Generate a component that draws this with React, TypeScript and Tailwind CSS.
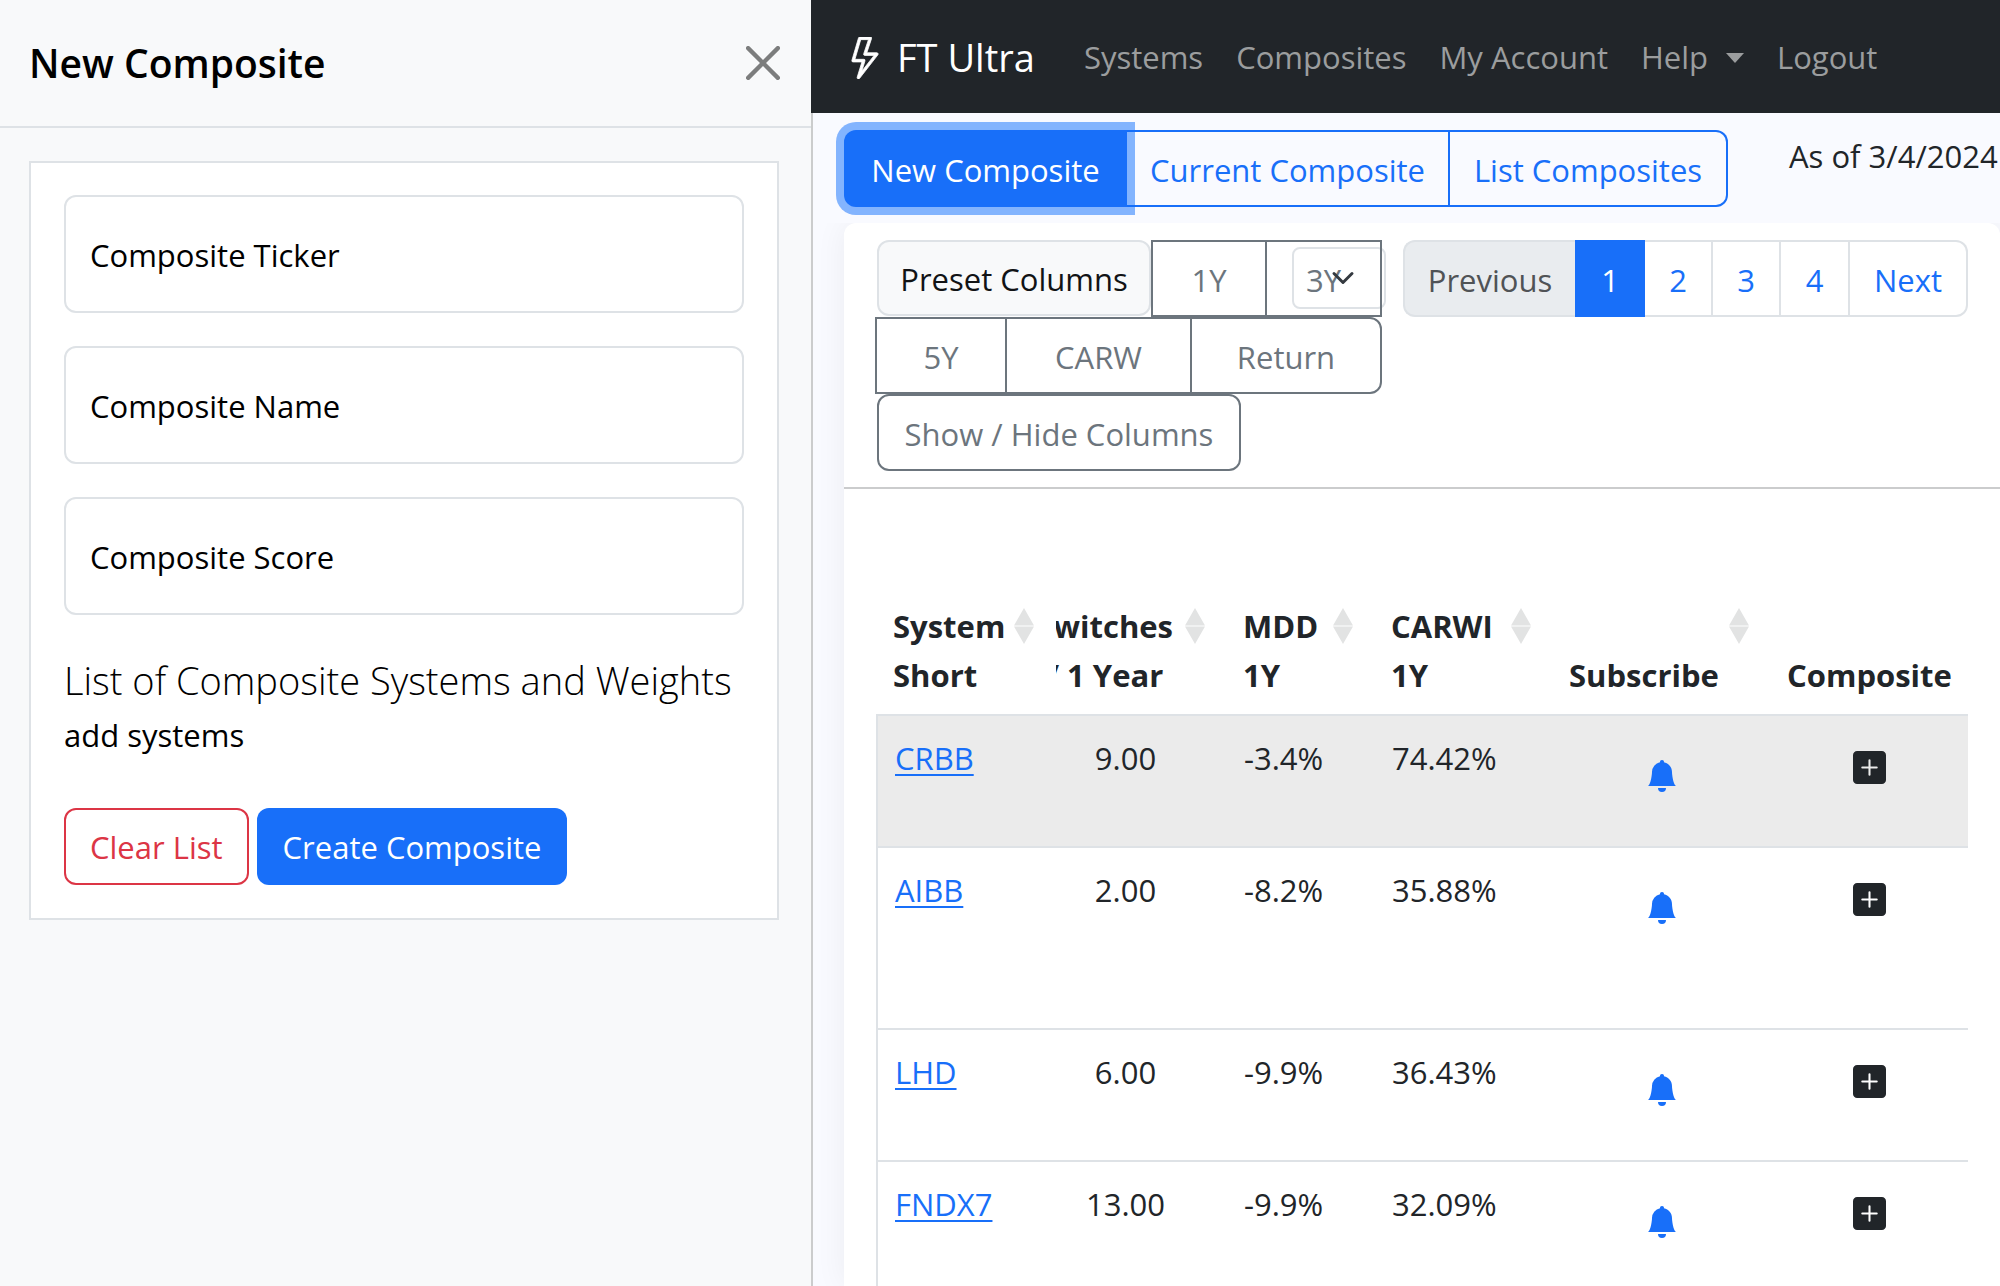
import React from "react";
import { BsBellFill, BsLightning, BsPlusSquareFill } from "react-icons/bs";

const fields = ["Composite Ticker", "Composite Name", "Composite Score"];

const rows = [
  { name: "CRBB", switches: "9.00", mdd: "-3.4%", carwi: "74.42%", row: "h-[132px] bg-[#ebebeb]" },
  { name: "AIBB", switches: "2.00", mdd: "-8.2%", carwi: "35.88%", row: "h-[182px]" },
  { name: "LHD", switches: "6.00", mdd: "-9.9%", carwi: "36.43%", row: "h-[132px]" },
  { name: "FNDX7", switches: "13.00", mdd: "-9.9%", carwi: "32.09%", row: "h-[132px]" },
];

function SortIcon() {
  return (
    <svg viewBox="0 0 20 36" className="h-9 w-5 shrink-0 text-[#e2e3e3]" fill="currentColor" aria-hidden="true">
      <path d="M10 0L20 17.5H0zM0 18.5H20L10 36z" />
    </svg>
  );
}

function HeadCell({ lines, sortable = true }: { lines: [string, string]; sortable?: boolean }) {
  return (
    <th scope="col" className="pr-[22px] pb-[14px] pl-4 text-left align-bottom font-bold">
      <div className="flex items-start justify-between">
        <span className="whitespace-nowrap">
          <span className="block h-[49px]">{lines[0]}</span>
          <span className="block h-[49px]">{lines[1]}</span>
        </span>
        {sortable && (
          <button type="button" aria-label={"Sort by " + lines.join(" ")} className="pt-[6px]">
            <SortIcon />
          </button>
        )}
      </div>
    </th>
  );
}

function Sidebar() {
  return (
    <aside className="flex w-[811px] shrink-0 flex-col bg-[#f8f9fa] text-black">
      <header className="flex h-32 items-center justify-between border-b-2 border-[#dee2e6] pr-[31px] pl-[29px]">
        <h1 className="text-[39px] font-semibold">New Composite</h1>
        <button type="button" aria-label="Close">
          <svg viewBox="0 0 16 16" className="size-[34px] text-[#7c7d7d]" fill="currentColor">
            <path d="M.293.293a1 1 0 0 1 1.414 0L8 6.586 14.293.293a1 1 0 1 1 1.414 1.414L9.414 8l6.293 6.293a1 1 0 0 1-1.414 1.414L8 9.414l-6.293 6.293a1 1 0 0 1-1.414-1.414L6.586 8 .293 1.707a1 1 0 0 1 0-1.414z" />
          </svg>
        </button>
      </header>
      <form className="mx-8 mt-[33px] ml-[29px] border-2 border-[#dee2e6] bg-white px-[33px] pt-8 pb-[33px]">
        <div className="flex flex-col gap-[33px]">
          {fields.map((f) => (
            <input
              key={f}
              type="text"
              aria-label={f}
              placeholder={f}
              className="h-[118px] w-full rounded-xl border-2 border-[#dee2e6] bg-white px-6 pt-[2px] placeholder:text-black placeholder:opacity-100"
            />
          ))}
        </div>
        <h2 className="mt-[38px] text-[38px] leading-[54px] font-light whitespace-nowrap">List of Composite Systems and Weights</h2>
        <p className="leading-[56px]">add systems</p>
        <div className="mt-[45px] flex gap-2">
          <button type="button" className="h-[77px] rounded-xl border-2 border-[#dc3545] px-6 pt-[2px] text-[#dc3545]">
            Clear List
          </button>
          <button type="submit" className="h-[77px] rounded-xl bg-[#186ff9] px-[26px] pt-[2px] text-white">
            Create Composite
          </button>
        </div>
      </form>
    </aside>
  );
}

function NavBar() {
  return (
    <nav className="flex h-[113px] shrink-0 items-center bg-[#212529] pt-[2px] pl-[33px] text-[#9b9d9e]">
      <a href="#home" className="mr-[49px] flex items-center gap-[11px] text-[38px] whitespace-nowrap text-white">
        <BsLightning className="size-[42px]" stroke="currentColor" strokeWidth={0.3} />
        FT Ultra
      </a>
      <div className="flex gap-[33px] whitespace-nowrap">
        <a href="#systems">Systems</a>
        <a href="#composites">Composites</a>
        <a href="#account">My Account</a>
        <button type="button" className="flex items-center gap-[18px]">
          Help
          <svg viewBox="0 0 18 10" className="h-[10px] w-[18px]" fill="currentColor" aria-hidden="true">
            <path d="M0 0h18L9 10z" />
          </svg>
        </button>
        <a href="#logout">Logout</a>
      </div>
    </nav>
  );
}

function Toolbar() {
  const preset = "flex h-[77px] items-center justify-center border-2 border-[#6c757d] pt-[3px]";
  const page = "flex h-[77px] items-center justify-center border-y-2 border-r-2 border-[#dee2e6] pt-[3px] text-[#186ff9]";
  return (
    <div className="flex items-start gap-[21px] border-b-2 border-[#cbcccd] pt-[17px] pb-4 pl-[31px] whitespace-nowrap">
      <div className="w-[507px] text-[#6c757d]">
        <div className="flex">
          <span className="ml-[2px] flex h-[76px] w-[274px] items-center justify-center rounded-xl border-2 border-[#dee2e6] bg-[#f8f9fa] pt-[3px] text-[#111315]">
            Preset Columns
          </span>
          <button type="button" className={preset + " w-[116px]"}>1Y</button>
          <div className="relative -ml-[2px] flex-1">
            <select
              aria-label="Rows per page"
              className="absolute top-[7px] -right-1 h-[62px] w-[94px] appearance-none rounded-lg border-2 border-[#dee2e6] bg-transparent text-transparent"
            >
              <option>10</option>
            </select>
            <button type="button" className={preset + " relative w-full"}>3Y</button>
            <svg viewBox="0 0 16 16" className="pointer-events-none absolute top-[26px] right-[27px] size-6 text-[#343a40]" fill="none" stroke="currentColor" strokeWidth="2" strokeLinecap="round" strokeLinejoin="round" aria-hidden="true">
              <path d="m2 5 6 6 6-6" />
            </svg>
          </div>
        </div>
        <div className="flex">
          <button type="button" className={preset + " w-[132px]"}>5Y</button>
          <button type="button" className={preset + " -ml-[2px] w-[187px]"}>CARW</button>
          <button type="button" className={preset + " -ml-[2px] flex-1 rounded-tr-xl rounded-br-xl"}>Return</button>
        </div>
        <button type="button" className={preset + " ml-[2px] w-[364px] rounded-xl"}>Show / Hide Columns</button>
      </div>
      <nav aria-label="Pagination" className="flex">
        <button type="button" disabled className="h-[77px] w-[172px] rounded-l-xl border-2 border-r-0 border-[#dee2e6] bg-[#e9ecef] pt-[3px] text-[#505356]">
          Previous
        </button>
        <button type="button" aria-current="page" className="h-[77px] w-[70px] bg-[#186ff9] pt-[3px] text-white">1</button>
        <button type="button" className={page + " w-[68px]"}>2</button>
        <button type="button" className={page + " w-[68px]"}>3</button>
        <button type="button" className={page + " w-[69px]"}>4</button>
        <button type="button" className={page + " w-[118px] rounded-r-xl"}>Next</button>
      </nav>
    </div>
  );
}

function SystemsTable() {
  return (
    <table className="mt-[110px] mr-8 ml-8 w-[calc(100%-64px)] table-fixed border-collapse">
      <colgroup>
        <col className="w-[179px]" />
        <col className="w-[171px]" />
        <col className="w-[148px]" />
        <col className="w-[178px]" />
        <col className="w-[218px]" />
        <col />
      </colgroup>
      <thead>
        <tr className="h-[116px] align-top leading-[49px]">
          <HeadCell lines={["System", "Short"]} />
          <th scope="col" className="pr-[22px] pb-[14px] text-left align-bottom font-bold">
            <div className="flex items-start justify-between">
              <div className="flex w-[117px] justify-end overflow-hidden">
                <span className="shrink-0 text-center whitespace-nowrap">
                  <span className="block h-[49px]">Switches</span>
                  <span className="block h-[49px]">/ 1 Year</span>
                </span>
              </div>
              <button type="button" aria-label="Sort by Switches / 1 Year" className="pt-[6px]">
                <SortIcon />
              </button>
            </div>
          </th>
          <HeadCell lines={["MDD", "1Y"]} />
          <HeadCell lines={["CARWI", "1Y"]} />
          <HeadCell lines={["", "Subscribe"]} />
          <HeadCell lines={["", "Composite"]} sortable={false} />
        </tr>
      </thead>
      <tbody className="border-l-2 border-[#dee2e6]">
        {rows.map((r) => (
          <tr key={r.name} className={"border-y-2 border-[#dee2e6] align-top leading-[49px] " + r.row}>
            <td className="pt-[18px] pl-[17px]">
              <a href={"#" + r.name} className="text-[#186ff9] underline decoration-2 underline-offset-4">{r.name}</a>
            </td>
            <td className="pt-[18px] pr-12 pl-4 text-center">{r.switches}</td>
            <td className="pt-[18px] pl-[17px]">{r.mdd}</td>
            <td className="pt-[18px] pl-[17px]">{r.carwi}</td>
            <td className="pt-[44px]">
              <button type="button" aria-label={"Subscribe to " + r.name} className="mx-auto block">
                <BsBellFill className="size-8 text-[#186ff9]" />
              </button>
            </td>
            <td className="pt-[35px]">
              <button type="button" aria-label={"Add " + r.name + " to composite"} className="mx-auto block">
                <BsPlusSquareFill className="size-[33px] text-[#212529]" />
              </button>
            </td>
          </tr>
        ))}
      </tbody>
    </table>
  );
}

export default function App() {
  return (
    <div className="flex h-screen overflow-hidden bg-[#f9faff] font-['Open_Sans','Noto_Sans',sans-serif] text-[31px] text-[#212529]">
      <Sidebar />
      <main className="flex min-w-0 flex-1 flex-col">
        <NavBar />
        <div className="flex min-h-0 flex-1 flex-col border-l-2 border-[#cbcccd]">
          <div className="flex h-[110px] shrink-0 gap-[61px] pt-[17px] pl-[31px] whitespace-nowrap">
            <div className="flex">
              <button type="button" className="z-10 h-[77px] w-[283px] rounded-l-xl bg-[#186ff9] pt-[3px] text-white shadow-[0_0_0_8px_rgba(13,110,253,0.5)]">
                New Composite
              </button>
              <button type="button" className="h-[77px] w-[323px] border-y-2 border-r-2 border-[#186ff9] pt-[3px] text-[#186ff9]">
                Current Composite
              </button>
              <button type="button" className="h-[77px] w-[278px] rounded-r-xl border-y-2 border-r-2 border-[#186ff9] pt-[3px] text-[#186ff9]">
                List Composites
              </button>
            </div>
            <p className="leading-[52px]">As of 3/4/2024</p>
          </div>
          <div className="ml-[7px] flex-1 overflow-hidden pl-6">
            <div className="h-full rounded-t-xl bg-white shadow-[0_0_32px_rgba(0,0,0,0.06)]">
              <Toolbar />
              <SystemsTable />
            </div>
          </div>
        </div>
      </main>
    </div>
  );
}
